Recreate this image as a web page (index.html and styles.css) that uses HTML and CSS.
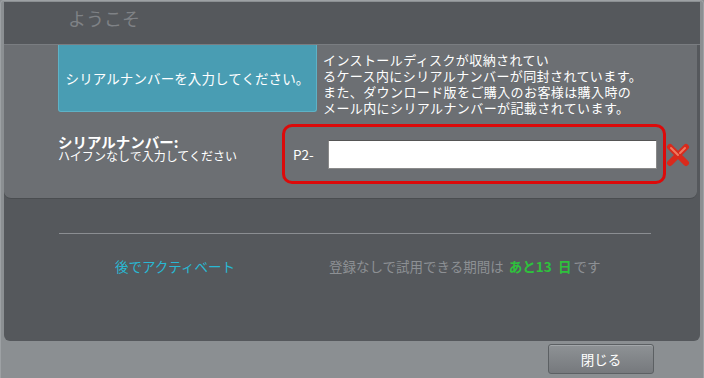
FILE: index.html
```html
<!DOCTYPE html>
<html lang="ja">
<head>
<meta charset="utf-8">
<link rel="stylesheet" href="styles.css">
</head>
<body>
<div class="window">
  <div class="panel">
    <div class="header"><span class="title">ようこそ</span></div>
    <div class="middle">
      <div class="row1">
        <div class="prompt">シリアルナンバーを入力してください。</div>
        <div class="info">
          <div class="line">インストールディスクが収納されてい</div>
          <div class="line">るケース内にシリアルナンバーが同封されています。</div>
          <div class="line">また、ダウンロード版をご購入のお客様は購入時の</div>
          <div class="line">メール内にシリアルナンバーが記載されています。</div>
        </div>
      </div>
      <div class="row2">
        <div class="label">
          <div class="label-main">シリアルナンバー:</div>
          <div class="label-sub">ハイフンなしで入力してください</div>
        </div>
        <div class="redbox">
          <span class="prefix">P2-</span>
          <div class="input"></div>
        </div>
        <svg class="xicon" width="24" height="26" viewBox="0 0 24 26">
          <path d="M4 5 L20 21 M20 5 L4 21" stroke="#d92a1c" stroke-width="6" stroke-linecap="round"/>
          <path d="M5 6 L12 13 M19 6 L14 11" stroke="#f07a60" stroke-width="2" stroke-linecap="round"/>
        </svg>
      </div>
    </div>
    <div class="lower">
      <div class="rule"></div>
      <div class="row3">
        <span class="later">後でアクティベート</span>
        <span class="trial">登録なしで試用できる期間は <b class="days">あと13&nbsp;&nbsp;日</b>です</span>
      </div>
    </div>
  </div>
  <div class="footer">
    <button class="close">閉じる</button>
  </div>
</div>
</body>
</html>
```

FILE: styles.css
```css
html, body {
  margin: 0;
  padding: 0;
}
body {
  width: 704px;
  height: 378px;
  overflow: hidden;
  font-family: "Noto Sans CJK JP", "DejaVu Sans", sans-serif;
  background: #8b8f92;
}
.window {
  width: 704px;
  height: 378px;
  box-sizing: border-box;
  background: #8b8f92;
  border: 1px solid #9da1a4;
  border-bottom: none;
  border-radius: 4px 4px 0 0;
  padding: 1px 3px 0 3px;
}
.panel {
  background: #55585c;
  height: 339px;
  border-radius: 0 0 6px 6px;
  display: flex;
  flex-direction: column;
}
.header {
  height: 43px;
  box-sizing: border-box;
  padding-left: 64px;
  padding-top: 6px;
  border-bottom: 1px solid #7a7d81;
}
.title {
  display: block;
  font-size: 18px;
  color: #7f8286;
  line-height: 20px;
}
.middle {
  background: #6c6f73;
  margin-right: 3px;
  border-radius: 0 0 7px 7px;
  padding: 0 0 14px 54px;
  border-bottom: 1px solid #4a4d50;
}
.row1 {
  display: flex;
  gap: 6px;
}
.prompt {
  width: 259px;
  height: 67px;
  box-sizing: border-box;
  background: #499db3;
  border: 1px solid #5eb2c6;
  border-top: none;
  border-radius: 0 0 3px 3px;
  color: #ffffff;
  font-size: 13.5px;
  display: flex;
  align-items: center;
  justify-content: center;
  letter-spacing: 0.1px;
}
.info {
  color: #ffffff;
  font-size: 13px;
  padding-top: 7px;
  white-space: nowrap;
  letter-spacing: 0.4px;
}
.line {
  height: 16px;
  line-height: 16px;
}
.row2 {
  display: flex;
  align-items: center;
  margin-top: 8px;
}
.label {
  width: 224px;
  color: #ffffff;
  padding-bottom: 10px;
}
.label-main {
  font-size: 14.5px;
  font-weight: bold;
  line-height: 14px;
}
.label-sub {
  font-size: 12px;
  line-height: 14px;
}
.redbox {
  width: 384px;
  height: 60px;
  box-sizing: border-box;
  border: 3px solid #dc0a0a;
  border-radius: 10px;
  display: flex;
  align-items: center;
  padding-left: 8px;
}
.prefix {
  color: #ffffff;
  font-size: 13.5px;
  width: 35px;
  white-space: nowrap;
}
.input {
  width: 329px;
  height: 29px;
  box-sizing: border-box;
  background: #ffffff;
  border: 1px solid #8a8a8a;
  border-top-color: #555;
}
.xicon {
  display: block;
  margin-top: 2px;
}
.lower {
  flex: 1;
  padding-left: 55px;
}
.rule {
  width: 592px;
  height: 1px;
  background: #8b8e92;
  margin-top: 34px;
}
.row3 {
  display: flex;
  align-items: center;
  margin-top: 22px;
  padding-left: 56px;
  font-size: 13.5px;
  line-height: 20px;
}
.later {
  color: #29b8d4;
  width: 214px;
}
.trial {
  color: #8d9094;
}
.days {
  color: #2ec23c;
  font-weight: bold;
  margin: 0 2px;
}
.footer {
  height: 37px;
  display: flex;
  justify-content: flex-end;
  align-items: flex-start;
  padding-right: 46px;
  padding-top: 3px;
  box-sizing: border-box;
}
.close {
  width: 106px;
  height: 30px;
  border: 1px solid #5c6063;
  border-radius: 3px;
  background: linear-gradient(#8e9295, #76797d);
  color: #ffffff;
  font-family: "Noto Sans CJK JP", sans-serif;
  font-size: 13.5px;
  padding: 0;
  box-shadow: inset 0 1px 0 #a3a7aa;
}
```
